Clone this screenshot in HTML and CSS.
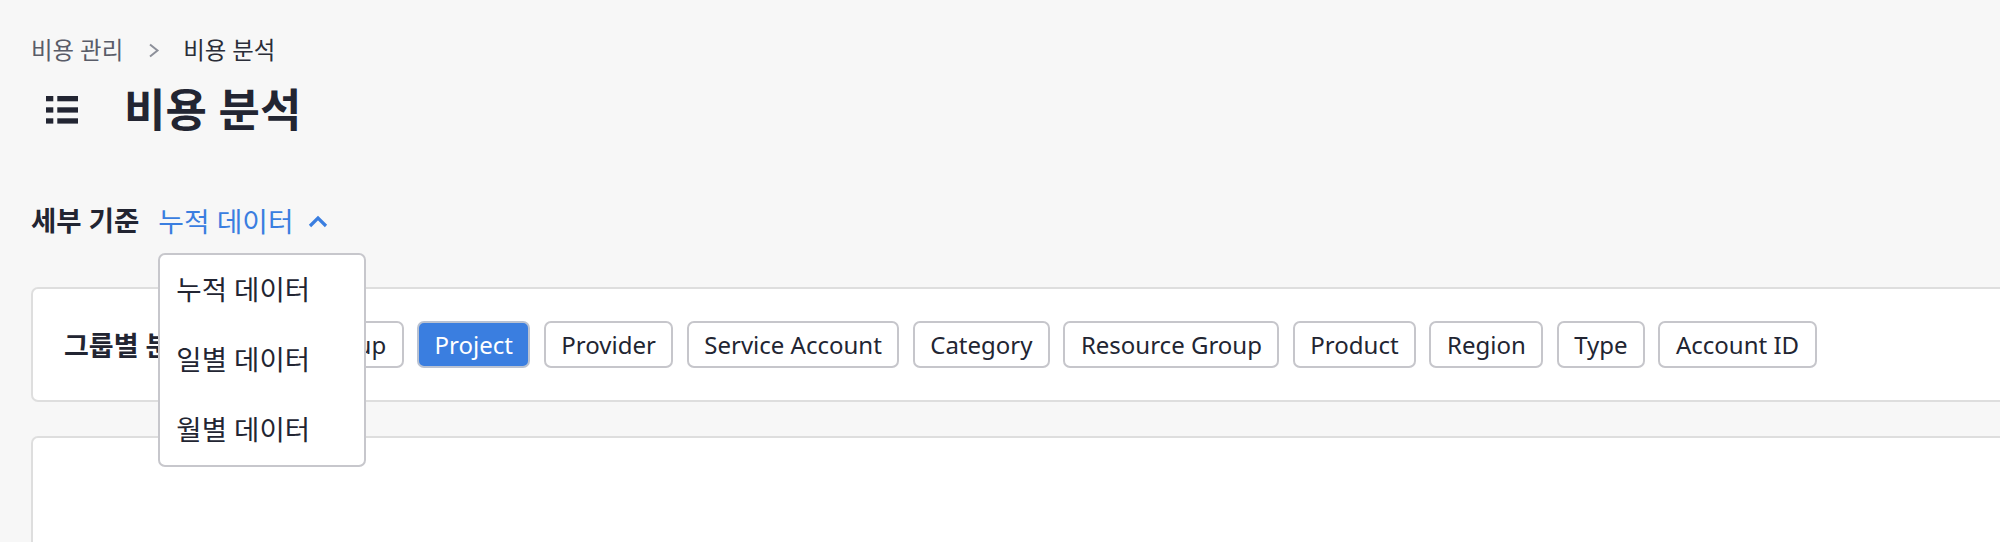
FILE: index.html
```html
<!DOCTYPE html>
<html lang="ko">
<head>
<meta charset="utf-8">
<title>비용 분석</title>
<link rel="stylesheet" href="styles.css">
</head>
<body>
<div class="page">
  <nav class="breadcrumb">
    <span class="crumb">비용 관리</span>
    <svg class="crumb-sep" width="12" height="15" viewBox="0 0 12 15"><path d="M2 1.5 L9.5 7.5 L2 13.5" fill="none" stroke="#8d909a" stroke-width="2"/></svg>
    <span class="crumb current">비용 분석</span>
  </nav>

  <header class="page-header">
    <svg class="list-icon" width="32" height="28" viewBox="0 0 32 28">
      <rect x="0" y="0" width="7.3" height="5.3" fill="#222532"/>
      <rect x="11.3" y="0" width="20.7" height="5.3" fill="#222532"/>
      <rect x="0" y="11.3" width="7.3" height="5.3" fill="#222532"/>
      <rect x="11.3" y="11.3" width="20.7" height="5.3" fill="#222532"/>
      <rect x="0" y="22.3" width="7.3" height="5.3" fill="#222532"/>
      <rect x="11.3" y="22.3" width="20.7" height="5.3" fill="#222532"/>
    </svg>
    <h1 class="title">비용 분석</h1>
  </header>

  <div class="filter-row">
    <span class="filter-label">세부 기준</span>
    <div class="dropdown">
      <button class="dropdown-trigger" type="button">
        <span>누적 데이터</span>
        <svg class="chevron" width="20" height="13" viewBox="0 0 20 13"><path d="M2 11 L10 3 L18 11" fill="none" stroke="#3a7ee0" stroke-width="3.2"/></svg>
      </button>
      <ul class="dropdown-menu">
        <li class="dropdown-item">누적 데이터</li>
        <li class="dropdown-item">일별 데이터</li>
        <li class="dropdown-item">월별 데이터</li>
      </ul>
    </div>
  </div>

  <section class="card group-card">
    <span class="group-label">그룹별 분석</span>
    <div class="chips">
      <button class="chip" type="button">Project Group</button>
      <button class="chip active" type="button">Project</button>
      <button class="chip" type="button">Provider</button>
      <button class="chip" type="button">Service Account</button>
      <button class="chip" type="button">Category</button>
      <button class="chip" type="button">Resource Group</button>
      <button class="chip" type="button">Product</button>
      <button class="chip" type="button">Region</button>
      <button class="chip" type="button">Type</button>
      <button class="chip" type="button">Account ID</button>
    </div>
  </section>

  <section class="card chart-card"></section>
</div>
</body>
</html>
```

FILE: styles.css
```css
html, body {
  margin: 0;
  padding: 0;
  background: #f7f7f7;
  overflow: hidden;
}

body {
  font-family: "Noto Sans", "Noto Sans CJK KR", sans-serif;
  color: #222532;
}

.page {
  padding-left: 31px;
  margin-right: -60px;
}

.breadcrumb {
  display: flex;
  align-items: center;
  height: 30px;
  margin-top: 35px;
  font-size: 23.4px;
  line-height: 30px;
}

.crumb {
  color: #595c68;
}

.crumb.current {
  color: #2a2d38;
}

.crumb-sep {
  margin: 0 23px 0 25px;
}

.page-header {
  display: flex;
  align-items: center;
  height: 60px;
  margin-top: 15px;
}

.list-icon {
  margin-left: 15px;
  margin-right: 46px;
}

.title {
  margin: 0;
  font-size: 45px;
  font-weight: 700;
  line-height: 60px;
}

.filter-row {
  display: flex;
  align-items: center;
  height: 36px;
  margin-top: 63px;
}

.filter-label {
  font-size: 27.5px;
  font-weight: 700;
  line-height: 36px;
  margin-right: 19px;
}

.dropdown {
  position: relative;
}

.dropdown-trigger {
  display: flex;
  align-items: center;
  gap: 15px;
  padding: 0;
  border: none;
  background: none;
  font: inherit;
  font-size: 27.8px;
  line-height: 36px;
  color: #3a7ee0;
}

.dropdown-menu {
  position: absolute;
  left: 0;
  top: calc(100% + 14px);
  z-index: 10;
  width: 204px;
  margin: 0;
  padding: 0;
  list-style: none;
  background: #fff;
  border: 2px solid #c7c7cc;
  border-radius: 7px;
}

.dropdown-item {
  height: 70px;
  padding-left: 16px;
  font-size: 27.5px;
  line-height: 70px;
  color: #222532;
}

.card {
  background: #fff;
  border: 2px solid #dedede;
  border-radius: 7px;
}

.group-card {
  display: flex;
  align-items: center;
  margin-top: 48px;
  padding: 32px 0 32px 31px;
}

.group-label {
  flex: none;
  width: 149px;
  font-size: 27px;
  font-weight: 700;
  white-space: nowrap;
  overflow: hidden;
}

.chips {
  display: flex;
  gap: 13.4px;
}

.chip {
  height: 47px;
  padding: 0 15.5px;
  border: 2px solid #c6c6cb;
  border-radius: 7px;
  background: #fff;
  font-family: "Noto Sans", sans-serif;
  font-size: 24px;
  line-height: 43px;
  color: #222532;
  white-space: nowrap;
}

.chip.active {
  background: #3a7ee0;
  border-color: #b9c2d2;
  color: #fff;
}

.chart-card {
  margin-top: 34px;
  height: 200px;
}
```
